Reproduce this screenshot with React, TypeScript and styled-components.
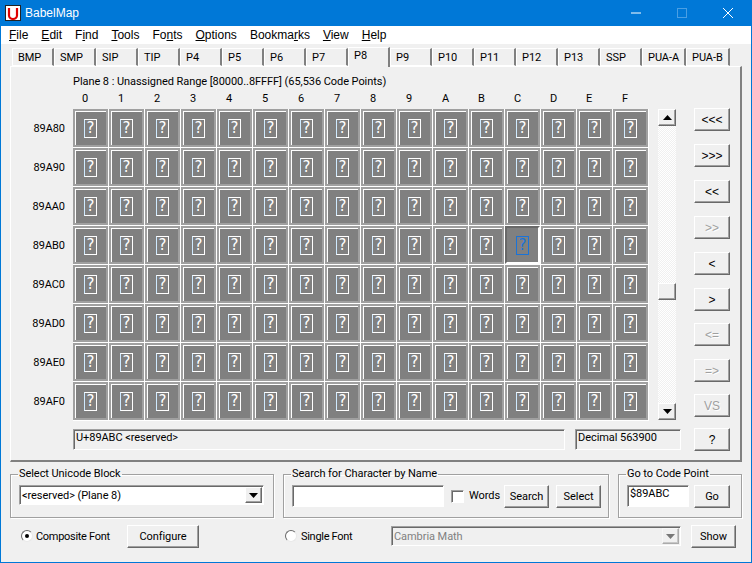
import React from 'react';
import styled, {createGlobalStyle, css} from 'styled-components';

const GlobalStyle = createGlobalStyle`
  html, body {
    margin: 0;
    padding: 0;
    background: #f0f0f0;
  }
  body {
    font-family: Roboto, "Liberation Sans", Arial, sans-serif;
    font-size: 11px;
    letter-spacing: -0.06px;
    color: #000;
  }
`

const raised = css`
  box-sizing: border-box;
  background: #f0f0f0;
  border-style: solid;
  border-width: 1px;
  border-color: #fff #696969 #696969 #fff;
  box-shadow: inset -1px -1px 0 #a0a0a0;
`

const sunken = css`
  box-sizing: border-box;
  border-style: solid;
  border-width: 1px;
  border-color: #a0a0a0 #fff #fff #a0a0a0;
  box-shadow: inset 1px 1px 0 #696969;
`

const Window = styled.div`
  box-sizing: border-box;
  width: 752px;
  height: 563px;
  border: 1px solid #0078d7;
  border-top: 0;
  display: flex;
  flex-direction: column;
  background: #f0f0f0;
  overflow: hidden;
`

const TitleBar = styled.div`
  height: 26px;
  flex: none;
  background: #0078d7;
  color: #fff;
  display: flex;
  align-items: center;
  font-family: "Liberation Sans", Arial, sans-serif;
  font-size: 12px;
  letter-spacing: 0;
  padding-left: 4px;
`

const Logo = styled.svg`
  width: 16px;
  height: 16px;
  margin-right: 4px;
`

const TitleText = styled.span`
  flex: 1;
`

const WinButton = styled.div`
  width: 46px;
  height: 26px;
  display: flex;
  align-items: center;
  justify-content: center;
`

const MenuBar = styled.div`
  height: 18px;
  flex: none;
  background: #fff;
  display: flex;
  align-items: center;
  gap: 13px;
  padding-left: 8px;
  font-family: "Liberation Sans", Arial, sans-serif;
  font-size: 12px;
  letter-spacing: 0;
`

const MenuItem = styled.span`
  white-space: nowrap;
`

const TabRow = styled.div`
  display: flex;
  height: 18px;
  margin-top: 4px;
  padding-left: 11px;
  align-items: flex-end;
  position: relative;
  z-index: 1;
`

const Tab = styled.div<{$active?: boolean; $width: number}>`
  box-sizing: border-box;
  width: ${({$width}) => $width}px;
  height: ${({$active}) => ($active ? 20 : 18)}px;
  margin-bottom: ${({$active}) => ($active ? -1 : 0)}px;
  padding-left: 5px;
  line-height: ${({$active}) => ($active ? 16 : 17)}px;
  white-space: nowrap;
  background: #f0f0f0;
  border-style: solid;
  border-width: 1px 2px ${({$active}) => ($active ? 0 : 1)}px 1px;
  border-color: #fff #808080 #fff #fff;
`

const Panel = styled.div`
  box-sizing: border-box;
  width: 732px;
  height: 396px;
  margin-left: 9px;
  flex: none;
  border-style: solid;
  border-width: 1px 2px 2px 1px;
  border-color: #fff #808080 #808080 #fff;
  display: flex;
  flex-direction: column;
`

const PlaneTitle = styled.div`
  margin: 8px 0 0 62px;
  height: 14px;
  line-height: 14px;
`

const ColumnHeader = styled.div`
  display: grid;
  grid-template-columns: repeat(16, 36px);
  margin: 2px 0 0 62px;
  height: 15px;
  line-height: 15px;
`

const ColumnLabel = styled.span`
  padding-left: 9px;
`

const Main = styled.div`
  display: flex;
  margin-top: 3px;
`

const RowLabels = styled.div`
  width: 54px;
  margin-right: 8px;
  padding-top: 1px;
  display: grid;
  grid-auto-rows: 39px;
`

const RowLabel = styled.div`
  text-align: right;
  line-height: 37px;
`

const CellGrid = styled.div`
  display: grid;
  grid-template-columns: repeat(16, 36px);
  grid-auto-rows: 39px;
  background: #fff;
  width: 576px;
  height: 312px;
`

const Cell = styled.div<{$selected?: boolean}>`
  box-sizing: border-box;
  width: 35px;
  height: 38px;
  background: #808080;
  display: flex;
  align-items: center;
  justify-content: center;
  ${({$selected}) =>
    $selected
      ? css`
          border: 2px solid;
          border-color: #696969 #fff #fff #696969;
        `
      : css`
          border: 2px solid #a0a0a0;
          box-shadow: inset 1px 1px 0 #fff;
        `}
`

const Glyph = styled.span<{$selected?: boolean}>`
  box-sizing: border-box;
  width: 13px;
  height: 19px;
  border: 1px solid ${({$selected}) => ($selected ? '#1a73d8' : '#fff')};
  border-left-color: ${({$selected}) => ($selected ? '#1a73d8' : '#cfeaff')};
  color: ${({$selected}) => ($selected ? '#1a73d8' : '#fff')};
  font-family: "DejaVu Sans", sans-serif;
  font-size: 15px;
  line-height: 17px;
  text-align: center;
`

const ScrollBar = styled.div`
  width: 18px;
  height: 311px;
  margin-left: 9px;
  display: flex;
  flex-direction: column;
  background-color: #f0f0f0;
  background-image: repeating-conic-gradient(#fff 0 25%, #f0f0f0 0 50%);
  background-size: 2px 2px;
  position: relative;
`

const ScrollButton = styled.div`
  ${raised};
  width: 18px;
  height: 17px;
  display: flex;
  align-items: center;
  justify-content: center;
`

const Track = styled.div`
  flex: 1;
`

const Thumb = styled.div`
  ${raised};
  position: absolute;
  top: 174px;
  left: 0;
  width: 18px;
  height: 17px;
`

const Arrow = styled.svg`
  width: 9px;
  height: 5px;
`

const SideButtons = styled.div`
  width: 36px;
  margin: -1px 0 0 18px;
  display: flex;
  flex-direction: column;
`

const Button = styled.button<{$w?: number; $h?: number; $disabled?: boolean; $mt?: number; $ml?: number}>`
  ${raised};
  flex: none;
  width: ${({$w}) => $w ?? 36}px;
  height: ${({$h}) => $h ?? 23}px;
  margin-top: ${({$mt}) => $mt ?? 0}px;
  margin-left: ${({$ml}) => $ml ?? 0}px;
  padding: 0;
  font: inherit;
  letter-spacing: inherit;
  color: ${({$disabled}) => ($disabled ? '#a0a0a0' : '#000')};
  text-shadow: ${({$disabled}) => ($disabled ? '1px 1px 0 #fff' : 'none')};
`

const SideButton = styled(Button)`
  font-size: 12px;
  font-family: "Liberation Sans", Arial, sans-serif;
`

const StatusRow = styled.div`
  display: flex;
  margin: 6px 0 0 62px;
  height: 23px;
`

const StatusBox = styled.div<{$w: number; $mr: number}>`
  ${sunken};
  width: ${({$w}) => $w}px;
  height: 21px;
  margin-top: 1px;
  margin-right: ${({$mr}) => $mr}px;
  padding: 1px 0 0 2px;
  line-height: 14px;
`

const Groups = styled.div`
  display: flex;
  margin: 5px 0 0 9px;
`

const Group = styled.fieldset<{$w: number; $ml?: number}>`
  box-sizing: border-box;
  width: ${({$w}) => $w}px;
  min-width: 0;
  height: 51px;
  margin: 0 0 0 ${({$ml}) => $ml ?? 0}px;
  padding: 4px 8px 0;
  border: 1px solid #a0a0a0;
  box-shadow: 1px 1px 0 #fff, inset 1px 1px 0 #fff;
  display: flex;
  align-items: flex-start;
  gap: 5px;
`

const Legend = styled.legend`
  padding: 0 1px;
  margin-left: -1px;
  line-height: 14px;
`

const Input = styled.div<{$w: number}>`
  ${sunken};
  width: ${({$w}) => $w}px;
  height: 22px;
  flex: none;
  background: #fff;
  line-height: 14px;
  padding: 1px 0 0 2px;
`

const Combo = styled.div<{$w: number; $disabled?: boolean}>`
  ${sunken};
  width: ${({$w}) => $w}px;
  height: 20px;
  flex: none;
  background: ${({$disabled}) => ($disabled ? '#f0f0f0' : '#fff')};
  color: ${({$disabled}) => ($disabled ? '#808080' : '#000')};
  display: flex;
  align-items: center;
  padding-left: 2px;
`

const ComboText = styled.span`
  flex: 1;
`

const ComboButton = styled.div<{$disabled?: boolean}>`
  ${raised};
  width: 17px;
  height: 16px;
  margin-right: 1px;
  display: flex;
  align-items: center;
  justify-content: center;
  opacity: ${({$disabled}) => ($disabled ? 0.5 : 1)};
`

const CheckBox = styled.div`
  ${sunken};
  width: 13px;
  height: 13px;
  background: #fff;
  margin: 5px 0 0 2px;
  flex: none;
`

const WordsLabel = styled.span`
  width: 30px;
  flex: none;
  line-height: 22px;
`

const BottomRow = styled.div`
  display: flex;
  align-items: center;
  margin: 6px 0 0 20px;
  height: 24px;
`

const Radio = styled.div<{$ml?: number}>`
  box-sizing: border-box;
  width: 12px;
  height: 12px;
  margin-left: ${({$ml}) => $ml ?? 0}px;
  border-radius: 50%;
  background: #fff;
  border: 1px solid;
  border-color: #696969 #e8e8e8 #e8e8e8 #696969;
  display: flex;
  align-items: center;
  justify-content: center;
  flex: none;
`

const RadioDot = styled.div`
  width: 4px;
  height: 4px;
  border-radius: 50%;
  background: #000;
`

const RadioLabel = styled.span<{$w: number; $ml: number}>`
  width: ${({$w}) => $w}px;
  margin-left: ${({$ml}) => $ml}px;
  white-space: nowrap;
  letter-spacing: -0.3px;
`

const menu: [string, string, string][] = [
  ['', 'F', 'ile'],
  ['', 'E', 'dit'],
  ['F', 'i', 'nd'],
  ['', 'T', 'ools'],
  ['Fo', 'n', 'ts'],
  ['', 'O', 'ptions'],
  ['Bookma', 'r', 'ks'],
  ['', 'V', 'iew'],
  ['', 'H', 'elp'],
];

const tabs = ['BMP', 'SMP', 'SIP', 'TIP', 'P4', 'P5', 'P6', 'P7', 'P8', 'P9', 'P10', 'P11', 'P12', 'P13', 'SSP', 'PUA-A', 'PUA-B'];
const columns = '0123456789ABCDEF'.split('');
const rows = ['89A80', '89A90', '89AA0', '89AB0', '89AC0', '89AD0', '89AE0', '89AF0'];

const side: {label: string; disabled?: boolean; mt: number}[] = [
  {label: '<<<', mt: 0},
  {label: '>>>', mt: 13},
  {label: '<<', mt: 13},
  {label: '>>', disabled: true, mt: 13},
  {label: '<', mt: 13},
  {label: '>', mt: 13},
  {label: '<=', disabled: true, mt: 12},
  {label: '=>', disabled: true, mt: 13},
  {label: 'VS', disabled: true, mt: 12},
];

const Down = () => (
  <Arrow viewBox="0 0 9 5"><path d="M0 0h9L4.5 5z" fill="#000"/></Arrow>
);

const App = () => (
  <>
    <GlobalStyle/>
    <Window>
      <TitleBar>
        <Logo viewBox="0 0 16 16">
          <rect x="0.5" y="0.5" width="15" height="15" fill="#fff" stroke="#222"/>
          <path d="M4 3v7.5a4 3.5 0 0 0 8 0V3" fill="none" stroke="#e00000" strokeWidth="2.2"/>
        </Logo>
        <TitleText>BabelMap</TitleText>
        <WinButton>
          <svg width="10" height="10" viewBox="0 0 10 10"><path d="M0 5h10" stroke="#fff"/></svg>
        </WinButton>
        <WinButton>
          <svg width="10" height="10" viewBox="0 0 10 10"><rect x="0.5" y="0.5" width="9" height="9" fill="none" stroke="#4a9fe4"/></svg>
        </WinButton>
        <WinButton>
          <svg width="10" height="10" viewBox="0 0 10 10"><path d="M0 0l10 10M10 0L0 10" stroke="#fff"/></svg>
        </WinButton>
      </TitleBar>
      <MenuBar>
        {menu.map(([a, u, b]) => (
          <MenuItem key={a + u + b}>{a}<u>{u}</u>{b}</MenuItem>
        ))}
      </MenuBar>
      <TabRow>
        {tabs.map(tab => (
          <Tab key={tab} $active={tab === 'P8'} $width={tab === 'PUA-B' ? 44 : tab === 'PUA-A' ? 44 : 42}>{tab}</Tab>
        ))}
      </TabRow>
      <Panel>
        <PlaneTitle>Plane 8 : Unassigned Range [80000..8FFFF] (65,536 Code Points)</PlaneTitle>
        <ColumnHeader>
          {columns.map(c => <ColumnLabel key={c}>{c}</ColumnLabel>)}
        </ColumnHeader>
        <Main>
          <RowLabels>
            {rows.map(r => <RowLabel key={r}>{r}</RowLabel>)}
          </RowLabels>
          <CellGrid>
            {rows.flatMap(r => columns.map(c => {
              const selected = r === '89AB0' && c === 'C';
              return (
                <Cell key={r + c} $selected={selected}>
                  <Glyph $selected={selected}>?</Glyph>
                </Cell>
              );
            }))}
          </CellGrid>
          <ScrollBar>
            <ScrollButton>
              <Arrow viewBox="0 0 9 5"><path d="M0 5h9L4.5 0z" fill="#000"/></Arrow>
            </ScrollButton>
            <Track/>
            <Thumb/>
            <ScrollButton><Down/></ScrollButton>
          </ScrollBar>
          <SideButtons>
            {side.map(b => (
              <SideButton key={b.label} $disabled={b.disabled} $mt={b.mt}>{b.label}</SideButton>
            ))}
          </SideButtons>
        </Main>
        <StatusRow>
          <StatusBox $w={492} $mr={10}>U+89ABC &lt;reserved&gt;</StatusBox>
          <StatusBox $w={106} $mr={13}>Decimal 563900</StatusBox>
          <SideButton>?</SideButton>
        </StatusRow>
      </Panel>
      <Groups>
        <Group $w={264}>
          <Legend>Select Unicode Block</Legend>
          <Combo $w={245}>
            <ComboText>&lt;reserved&gt; (Plane 8)</ComboText>
            <ComboButton><Down/></ComboButton>
          </Combo>
        </Group>
        <Group $w={326} $ml={9}>
          <Legend>Search for Character by Name</Legend>
          <Input $w={152}/>
          <CheckBox/>
          <WordsLabel>Words</WordsLabel>
          <Button $w={45}>Search</Button>
          <Button $w={45} $ml={2}>Select</Button>
        </Group>
        <Group $w={124} $ml={9}>
          <Legend>Go to Code Point</Legend>
          <Input $w={62}>$89ABC</Input>
          <Button $w={36}>Go</Button>
        </Group>
      </Groups>
      <BottomRow>
        <Radio><RadioDot/></Radio>
        <RadioLabel $w={91} $ml={3}>Composite Font</RadioLabel>
        <Button $w={72}>Configure</Button>
        <Radio $ml={86}/>
        <RadioLabel $w={90} $ml={4}>Single Font</RadioLabel>
        <Combo $w={290} $disabled>
          <ComboText>Cambria Math</ComboText>
          <ComboButton $disabled><Down/></ComboButton>
        </Combo>
        <Button $w={45} $ml={10}>Show</Button>
      </BottomRow>
    </Window>
  </>
);

export default App;
